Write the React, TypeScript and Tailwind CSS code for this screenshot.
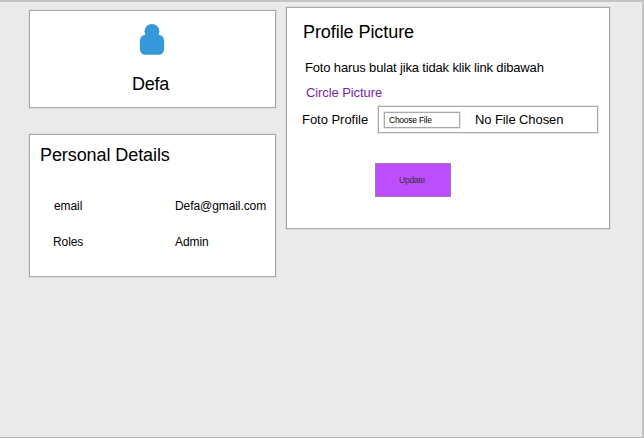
import React from "react";

const card = "border border-[#a9a9a9] bg-white shadow-[0_0_0_0.5px_#cfcfcf]";

function UserIcon() {
  return (
    <svg className="mr-[2px]" width="26" height="34" viewBox="0 0 26 34" fill="#3498db" aria-hidden="true">
      <circle cx="12.9" cy="8.3" r="7.4" />
      <path d="M6.5 10h12.8v5H6.5z" />
      <rect x="0.9" y="11.8" width="24.2" height="20" rx="5.5" />
    </svg>
  );
}

function SummaryCard() {
  return (
    <section className={`${card} flex h-[98px] flex-col items-center pt-[12px]`}>
      <UserIcon />
      <h1 className="mt-[17px] pr-[4px] text-[18px] leading-[20px] tracking-[-0.3px]">Defa</h1>
    </section>
  );
}

function DetailsCard() {
  return (
    <section className={`${card} mt-[26px] h-[143px] pt-[10px]`}>
      <h2 className="pl-[10px] text-[18px] leading-[20px] tracking-[-0.08px]">Personal Details</h2>
      <dl className="mt-[33px] grid grid-cols-[145px_1fr] gap-y-[20px] text-[12px] leading-[16px] tracking-[-0.08px]">
        <dt className="pl-[24px]">email</dt>
        <dd>Defa@gmail.com</dd>
        <dt className="pl-[23px]">Roles</dt>
        <dd>Admin</dd>
      </dl>
    </section>
  );
}

function PictureCard() {
  return (
    <section className={`${card} mt-[-3px] ml-[10px] h-[222px] w-[324px] pt-[14px]`}>
      <h2 className="pl-[16px] text-[18px] leading-[20px] tracking-[-0.07px]">Profile Picture</h2>
      <p className="mt-[18px] pl-[18px] text-[13px] leading-[16px] tracking-[-0.155px]">Foto harus bulat jika tidak klik link dibawah</p>
      <a className="mt-[9px] block pl-[19px] text-[13px] leading-[16px] tracking-[-0.09px] text-[#7a1fa8]">Circle Picture</a>
      <div className="mt-[5px] flex items-center pl-[15px] text-[13px] tracking-[-0.09px]">
        <label className="w-[76px] leading-[16px] tracking-[-0.03px]">Foto Profile</label>
        <div className={`${card} flex h-[27px] w-[220px] items-center pl-[5px]`}>
          <button className={`${card} h-[16px] w-[76px] pl-[4px] text-left text-[8.5px] leading-[14px] tracking-[-0.25px]`}>Choose File</button>
          <span className="ml-[15px] leading-[16px]">No File Chosen</span>
        </div>
      </div>
      <button className="mt-[30px] ml-[88px] block h-[34px] w-[76px] border border-[#9d77b0] bg-[#be4dff] pr-[2px] text-[8.5px] leading-[14px] tracking-[-0.25px] text-[#333333]">
        Update
      </button>
    </section>
  );
}

export default function App() {
  return (
    <main className="flex h-[438px] w-[644px] items-start overflow-hidden border-t-2 border-r-2 border-b border-t-[#c3c3c3] border-r-[#c3c3c3] border-b-[#b5b5b5] bg-[#eaeaea] pt-[8px] pl-[29px] font-['Liberation_Sans',Arial,sans-serif] whitespace-nowrap text-black">
      <div className="w-[247px] shrink-0">
        <SummaryCard />
        <DetailsCard />
      </div>
      <PictureCard />
    </main>
  );
}
